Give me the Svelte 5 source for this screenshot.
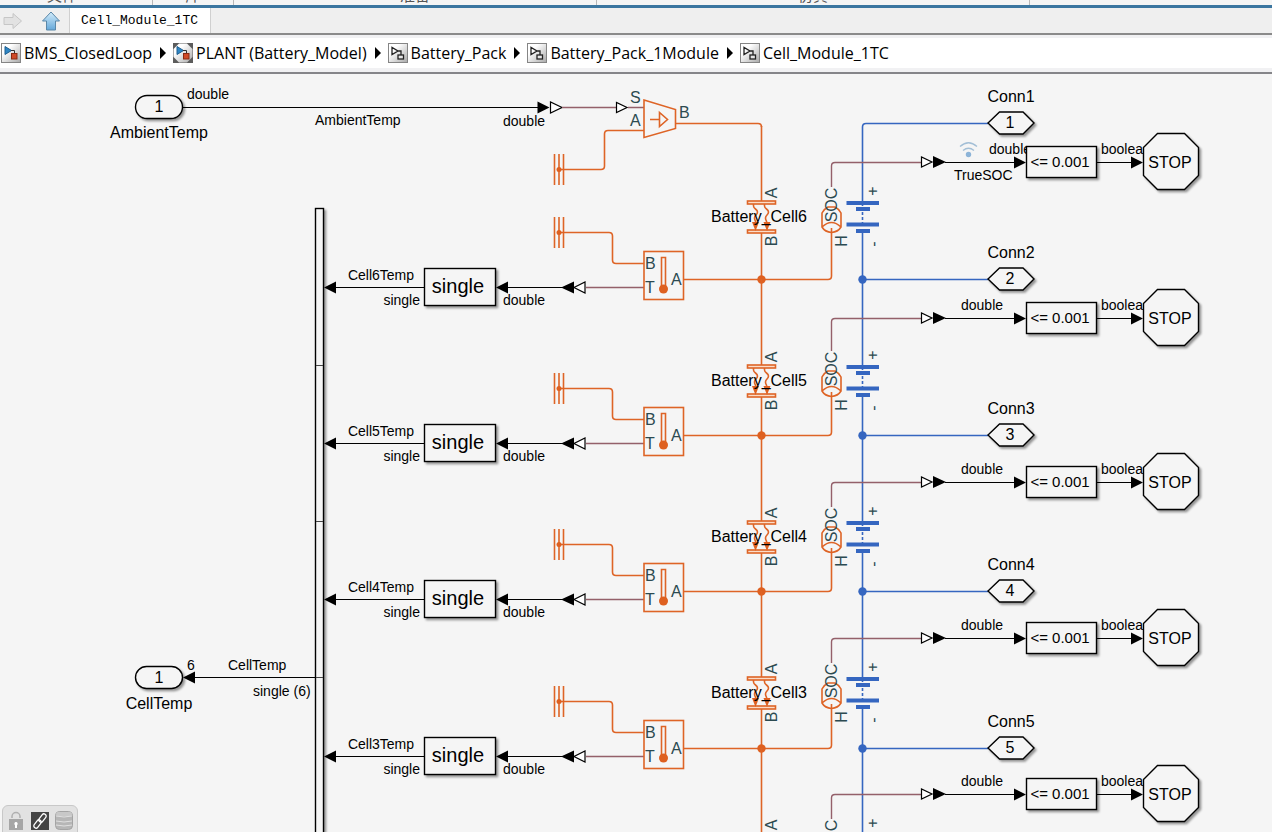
<script>
  const sections = [
    { label: '文件', kind: 'file' },
    { label: '库', kind: 'library' },
    { label: '准备', kind: 'prepare' },
    { label: '仿真', kind: 'simulate' },
    { label: '', kind: 'rest' }
  ];

  const crumbs = [
    { label: 'BMS_ClosedLoop', icon: 'model' },
    { label: 'PLANT (Battery_Model)', icon: 'reference' },
    { label: 'Battery_Pack', icon: 'subsystem' },
    { label: 'Battery_Pack_1Module', icon: 'subsystem' },
    { label: 'Cell_Module_1TC', icon: 'subsystem' }
  ];

  // y: thermal junction, cell: centre of the battery block, from: start of the heat line above
  const cells = [
    { n: 6, y: 279, cell: 217, from: 126 },
    { n: 5, y: 435, cell: 381, from: 279 },
    { n: 4, y: 591, cell: 537, from: 435 },
    { n: 3, y: 748, cell: 693, from: 591 },
    { n: 2, y: 904, cell: 849, from: 748 }
  ];

  const checks = [162, 318, 482, 638, 794];

  const connections = [
    { n: 1, y: 123 },
    { n: 2, y: 279 },
    { n: 3, y: 435 },
    { n: 4, y: 591 },
    { n: 5, y: 748 }
  ];
</script>

{#snippet thermalMass(x, y)}
  <path class="heat" d="M{x - 4.5} {y - 15.5}v31M{x} {y - 15.5}v31M{x + 4.5} {y - 15.5}v31" />
  <circle class="heat-fill" cx={x} cy={y} r="2.5" />
{/snippet}

<div class="app">
  <div class="ribbon">
    {#each sections as s}
      <span class="section {s.kind}">{s.label}</span>
    {/each}
  </div>

  <div class="tabs">
    <button class="nav" aria-label="Forward">
      <svg width="20" height="20" viewBox="0 0 20 20">
        <path d="M1 6.500h9V2.500l8.500 7.500L10 17.500v-4H1z" fill="#e2e2e2" stroke="#c6c6c6" />
      </svg>
    </button>
    <button class="nav" aria-label="Up to parent">
      <svg width="20" height="20" viewBox="0 0 20 20">
        <defs>
          <linearGradient id="up" x1="0" y1="0" x2="0" y2="1">
            <stop offset="0" stop-color="#d3ecfa" />
            <stop offset="1" stop-color="#64a8da" />
          </linearGradient>
        </defs>
        <path d="M10 1L18.500 10H14.500v9h-9v-9H1.500z" fill="url(#up)" stroke="#5a87a8" />
      </svg>
    </button>
    <button class="tab">Cell_Module_1TC</button>
  </div>

  <nav class="crumbs">
    <ol>
      {#each crumbs as c, i}
        <li>
          <a href="#{i}">
            <svg width="20" height="20" viewBox="0 0 20 20">
              <defs>
                <linearGradient id="tile{i}" x1="0" y1="0" x2="1" y2="1">
                  <stop offset="0.300" stop-color="#fff" />
                  <stop offset="1" stop-color="#a8a8a8" />
                </linearGradient>
              </defs>
              {#if c.icon === 'reference'}
                <rect width="20" height="20" fill="#5c5c5c" />
                <path d="M6 .5h8L19.500 6v8L14 19.500H6L.5 14V6z" fill="url(#tile{i})" />
              {:else}
                <rect x=".5" y=".5" width="19" height="19" fill="url(#tile{i})" stroke="#858585" />
              {/if}
              {#if c.icon === 'subsystem'}
                <path d="M4 4.500v7l6-3.500zM10 8h3v4" fill="none" stroke="#222" stroke-width="1.300" />
                <rect x="10" y="12" width="5.500" height="4" fill="#e5e5e5" stroke="#222" stroke-width="1.300" />
              {:else}
                <path d="M4 3.500v8l6.500-4z" fill="#2f86c4" stroke="#1e5f90" />
                <path d="M10 7.500h3.500v3" fill="none" stroke="#333" />
                <rect x="10.500" y="10.500" width="5.500" height="5.500" fill="#d04a28" stroke="#8a2a12" />
              {/if}
            </svg>
            <span>{c.label}</span>
          </a>
          {#if i < crumbs.length - 1}
            <svg class="sep" width="6" height="12" viewBox="0 0 6 12"><path d="M0 0l6 6-6 6z" /></svg>
          {/if}
        </li>
      {/each}
    </ol>
  </nav>

  <main class="canvas">
    <svg class="diagram" width="100%" height="100%">
      <g transform="translate(0 -74)">
        <!-- ambient temperature source -->
        <path class="signal" d="M183 107.500H538" />
        <rect class="block" x="135.500" y="95.500" width="47" height="23" rx="11.500" />
        <text class="name mid" x="159" y="112">1</text>
        <text class="name mid" x="159" y="138">AmbientTemp</text>
        <text class="note" x="187" y="99">double</text>
        <text class="note" x="315" y="125">AmbientTemp</text>
        <text class="note" x="503" y="126">double</text>
        <path d="M537.500 101.500v12l12-6z" />
        <path class="hollow" d="M550.500 102v11l11.500-5.500z" />
        <path class="physical" d="M562 107.500h54M628 107.500h16" />
        <path class="hollow" d="M616.500 102.500v10l10.500-5z" />

        <!-- temperature source block -->
        <path class="heat" d="M644 100l31.500 9.500v19L644 137.500zM650 119.500h9M659.500 112.500v14l8-7z" />
        <path class="heat" d="M559 169.500H601q3.500 0 3.500-3.500V134q0-3.500 3.500-3.500H644" />
        <path class="heat" d="M676 123.500H758q3.500 0 3.500 3.500" />
        {@render thermalMass(559, 169.5)}
        <text class="port" x="630" y="103">S</text>
        <text class="port" x="630" y="126">A</text>
        <text class="port" x="679" y="118">B</text>

        <!-- temperature bus -->
        <path class="signal" d="M195 677.500H315" />
        <rect class="block" x="315.500" y="208.500" width="8" height="800" />
        <path class="tick" d="M316 365.500h7M316 521.500h7M316 677.500h7" />
        <path d="M183 677.500l12-6v12z" />
        <rect class="block" x="135.500" y="666.500" width="47" height="22" rx="11" />
        <text class="name mid" x="159" y="683">1</text>
        <text class="name mid" x="159" y="709">CellTemp</text>
        <text class="note" x="187" y="670">6</text>
        <text class="note" x="228" y="670">CellTemp</text>
        <text class="note" x="253" y="696">single (6)</text>

        <!-- electrical bus -->
        <path class="power" d="M988 123.500H866q-3.500 0-3.500 3.500V840" />

        {#each cells as c}
          <!-- measured temperature -->
          <g transform="translate(0 {c.y - 279})">
            <path class="signal" d="M335 287.500H425M507 287.500H562" />
            <rect class="block" x="424.500" y="268.500" width="71" height="37" />
            <path d="M324 287.500l12-6v12zM496 287.500l12-6v12zM561 287.500l13-6v12z" />
            <path class="hollow" d="M585 282v11l-11-5.500z" />
            <path class="physical" d="M586 287.500h58" />
            <text class="type mid" x="458" y="293">single</text>
            <text class="note mid" x="381" y="280">Cell{c.n}Temp</text>
            <text class="note end" x="420" y="305">single</text>
            <text class="note" x="503" y="305">double</text>
            <rect class="heat" x="644" y="251.500" width="39.500" height="48" />
            <path class="heat" d="M559 232.500H609q3.500 0 3.500 3.500V260q0 3.500 3.500 3.500H644" />
            <path class="heat" d="M684 279.500H828q3.500 0 3.500-3.500" />
            {@render thermalMass(559, 232.5)}
            <path class="heat" d="M661.500 257.500h4v29h-4z" />
            <circle class="heat-fill" cx="663.500" cy="289" r="4.500" />
            <text class="port" x="645" y="269">B</text>
            <text class="port" x="645" y="293">T</text>
            <text class="port" x="671" y="285">A</text>
          </g>
          <path class="heat" d="M761.500 {c.from}V{c.cell - 16}M761.500 {c.cell + 16}V{c.y}M831.500 {c.cell + 11}V{c.y - 3}" />
          <circle class="heat-fill" cx="761.500" cy={c.y + 0.5} r="4.200" />

          <!-- battery cell -->
          <g transform="translate(0 {c.cell - 217})">
            <rect class="heat plate" x="747.500" y="201" width="28" height="3" />
            <rect class="heat plate" x="747.500" y="230" width="28" height="3" />
            <path class="heat" d="M753.500 204v2c0 3 4 3 4 6s-3 3-3 6 2 3 1 6M764.500 204v2c0 3 4 3 4 6s-3 3-3 6 2 3 1 6" />
            <path class="heat-fill" d="M752 222h7l-3.500 9zM763.500 222h7l-3.500 9z" />
            <path class="heat" d="M822 213q2-4 6-6h7q4 2 6 6v14q-3 5-9.500 5.500-6.500-.5-9.500-5.500zM822 227q9.500-9 19 0" />
            <text class="port mid" transform="translate(777 193) rotate(-90)">A</text>
            <text class="port mid" transform="translate(777 241) rotate(-90)">B</text>
            <text class="port mid" transform="translate(837 205) rotate(-90)">SOC</text>
            <text class="port mid" transform="translate(847 241) rotate(-90)">H</text>
            <rect class="gap" x="860" y="206" width="5" height="24" />
            <path class="power" stroke-dasharray="3 2" d="M862.500 212v11" />
            <path class="power-fill" d="M846.500 201h32.500v4h-32.500zM856 207h14v4h-14zM846.500 222.500h32.500v4h-32.500zM856 229h14v4h-14z" />
            <text class="port mid" transform="translate(878 191) rotate(-90)">+</text>
            <text class="port mid" transform="translate(879 244) rotate(-90)">-</text>
            <text class="name mid" x="759" y="222">Battery_Cell{c.n}</text>
          </g>
        {/each}

        <!-- state of charge checks -->
        {#each checks as y, i}
          <path class="physical" d="M831.500 {cells[i].cell - 30}V{y + 4}q0-3.500 3.500-3.500H921" />
          <g transform="translate(0 {y - 162})">
            <path class="signal" d="M945 162.500h70M1097 162.500h35" />
            <path class="hollow" d="M921.500 157v10l10.500-5z" />
            <path d="M933 156v12l13-6zM1014 156.500v12l12-6zM1131 156.500v12l12-6z" />
            <text class="note" x={i ? 961 : 989} y="154">double</text>
            <text class="note" x="1101" y="154">boolean</text>
            <rect class="block" x="1026.500" y="146.500" width="70" height="31" />
            <text class="test mid" x="1060" y="167">&lt;= 0.001</text>
            <path class="block" d="M1157.500 133.500h27l14 14v28l-14 14h-27l-14-14v-28z" />
            <text class="name mid" x="1170" y="168">STOP</text>
          </g>
        {/each}
        <text class="note" x="954" y="180">TrueSOC</text>
        <g class="logging">
          <path d="M960 146.500q8.500-7.500 17 0M963 150.500q5.500-4.500 11 0" />
          <circle cx="968.500" cy="154.500" r="2.700" />
        </g>

        {#each connections as c, i}
          {#if i > 0}
            <path class="power" d="M862.500 {c.y + 0.5}H988" />
            <circle class="power-fill" cx="862.500" cy={c.y + 0.5} r="4.200" />
          {/if}
          <path class="block" d="M988 {c.y}l11.500-11h23.500l11 11-11 11h-23.500z" />
          <text class="name mid" x="1010" y={c.y + 5}>{c.n}</text>
          <text class="name mid" x="1011" y={c.y - 21}>Conn{c.n}</text>
        {/each}
      </g>
    </svg>

    <div class="badge">
      <button aria-label="Lock library link">
        <svg width="20" height="20" viewBox="0 0 20 20">
          <path d="M6 7V5.500a4 4 0 0 1 8 0V7" fill="none" stroke="#b0b0b0" stroke-width="1.500" />
          <rect x="3" y="8" width="14" height="11" fill="#a6a6a6" />
          <path d="M10 11a1.800 1.800 0 0 1 1 3.200V17H9v-2.800a1.800 1.800 0 0 1 1-3.200z" fill="#fff" />
        </svg>
      </button>
      <button aria-label="Linked block">
        <svg width="20" height="20" viewBox="0 0 20 20">
          <rect x="1" y="1" width="18" height="18" fill="#444" />
          <g fill="none" stroke="#fff" stroke-width="1.300">
            <rect x="-4.500" y="-2.200" width="9" height="4.400" rx="2" transform="translate(12.500 7) rotate(-52)" />
            <rect x="-4.500" y="-2.200" width="9" height="4.400" rx="2" transform="translate(7.500 13) rotate(-52)" />
          </g>
        </svg>
      </button>
      <button aria-label="Data dictionary">
        <svg width="20" height="20" viewBox="0 0 20 20">
          <rect x="1.500" y=".5" width="17" height="18" rx="4" fill="#b6b6b6" stroke="#a4a4a4" />
          <rect x="2" y="1" width="16" height="4" rx="2" fill="#c8c8c8" />
          <path d="M2 5q8 2 16 0M2 10q8 2 16 0M2 14q8 2 16 0" fill="none" stroke="#e0e0e0" />
        </svg>
      </button>
    </div>
  </main>
</div>

<style>
  :global(body) {
    margin: 0;
  }
  .app {
    display: flex;
    flex-direction: column;
    height: 100vh;
    background: #f5f5f5;
    color: #000;
    font-family: 'Liberation Sans', sans-serif;
  }
  button {
    padding: 0;
    border: 0;
    background: none;
  }
  svg {
    display: block;
    flex: none;
  }
  .ribbon {
    display: flex;
    align-items: flex-end;
    height: 5px;
    overflow: hidden;
    border-bottom: 3px solid #3b76a0;
    font: 15px/20px 'Noto Sans CJK SC', sans-serif;
    color: #555;
  }
  .section {
    flex: none;
    box-sizing: border-box;
    height: 20px;
    border-right: 1px solid #b8b8b8;
    text-align: center;
  }
  .file {
    width: 153px;
    padding-right: 28px;
  }
  .library {
    width: 81px;
  }
  .prepare {
    width: 363px;
  }
  .simulate {
    width: 433px;
  }
  .rest {
    flex: 1;
    border: 0;
  }
  .tabs {
    display: flex;
    align-items: center;
    height: 25px;
    padding-left: 3px;
    background: #efefef;
    border-bottom: 2px solid #8a8a8a;
  }
  .nav {
    margin-right: 18px;
  }
  .nav + .tab {
    margin-left: -10px;
  }
  .tab {
    align-self: stretch;
    padding: 0 12px 0 11px;
    background: #fff;
    border: solid #d0d0d0;
    border-width: 0 1px;
    font: 13px/25px 'Liberation Mono', monospace;
  }
  .crumbs {
    padding: 3px 0 4px;
    background: #f1f1f3;
    border-bottom: 2px solid #858589;
  }
  ol {
    display: flex;
    align-items: center;
    height: 30px;
    margin: 0;
    padding: 0 1px;
    background: #fff;
    list-style: none;
  }
  li,
  a {
    display: flex;
    align-items: center;
  }
  a {
    gap: 3px;
    color: #000;
    font: 16px/24px 'Open Sans', sans-serif;
    text-decoration: none;
    white-space: nowrap;
  }
  .sep {
    margin: 0 7px 0 8px;
  }
  .canvas {
    position: relative;
    flex: 1;
    min-height: 0;
    overflow: hidden;
  }
  .block {
    fill: #f5f5f5;
    stroke: #000;
    stroke-width: 1.4;
    filter: drop-shadow(2px 2px 1px rgba(0, 0, 0, 0.4));
  }
  .signal {
    fill: none;
    stroke: #000;
  }
  .tick {
    stroke: #444;
  }
  .hollow {
    fill: #fff;
    stroke: #000;
    stroke-width: 1.2;
  }
  .physical {
    fill: none;
    stroke: #94606a;
    stroke-width: 1.4;
  }
  .heat {
    fill: none;
    stroke: #de6426;
    stroke-width: 1.6;
  }
  .plate {
    fill: #fbdcc8;
  }
  .heat-fill {
    fill: #de6020;
  }
  .power {
    fill: none;
    stroke: #3566c0;
    stroke-width: 1.6;
  }
  .power-fill {
    fill: #3566c0;
  }
  .gap {
    fill: #f5f5f5;
  }
  .logging path {
    fill: none;
    stroke: #a3bfd6;
    stroke-width: 1.3;
  }
  .logging circle {
    fill: #8db4d8;
  }
  text {
    font-size: 16px;
  }
  .note {
    font-size: 14px;
  }
  .test {
    font-size: 15px;
  }
  .type {
    font-size: 20px;
  }
  .port {
    fill: #2c4a50;
  }
  .mid {
    text-anchor: middle;
  }
  .end {
    text-anchor: end;
  }
  .badge {
    position: absolute;
    left: 2px;
    bottom: -6px;
    display: flex;
    gap: 4px;
    padding: 5px 3px 6px;
    background: #e2e2e2;
    border: 1px solid #c8c8c8;
    border-radius: 6px;
  }
</style>
